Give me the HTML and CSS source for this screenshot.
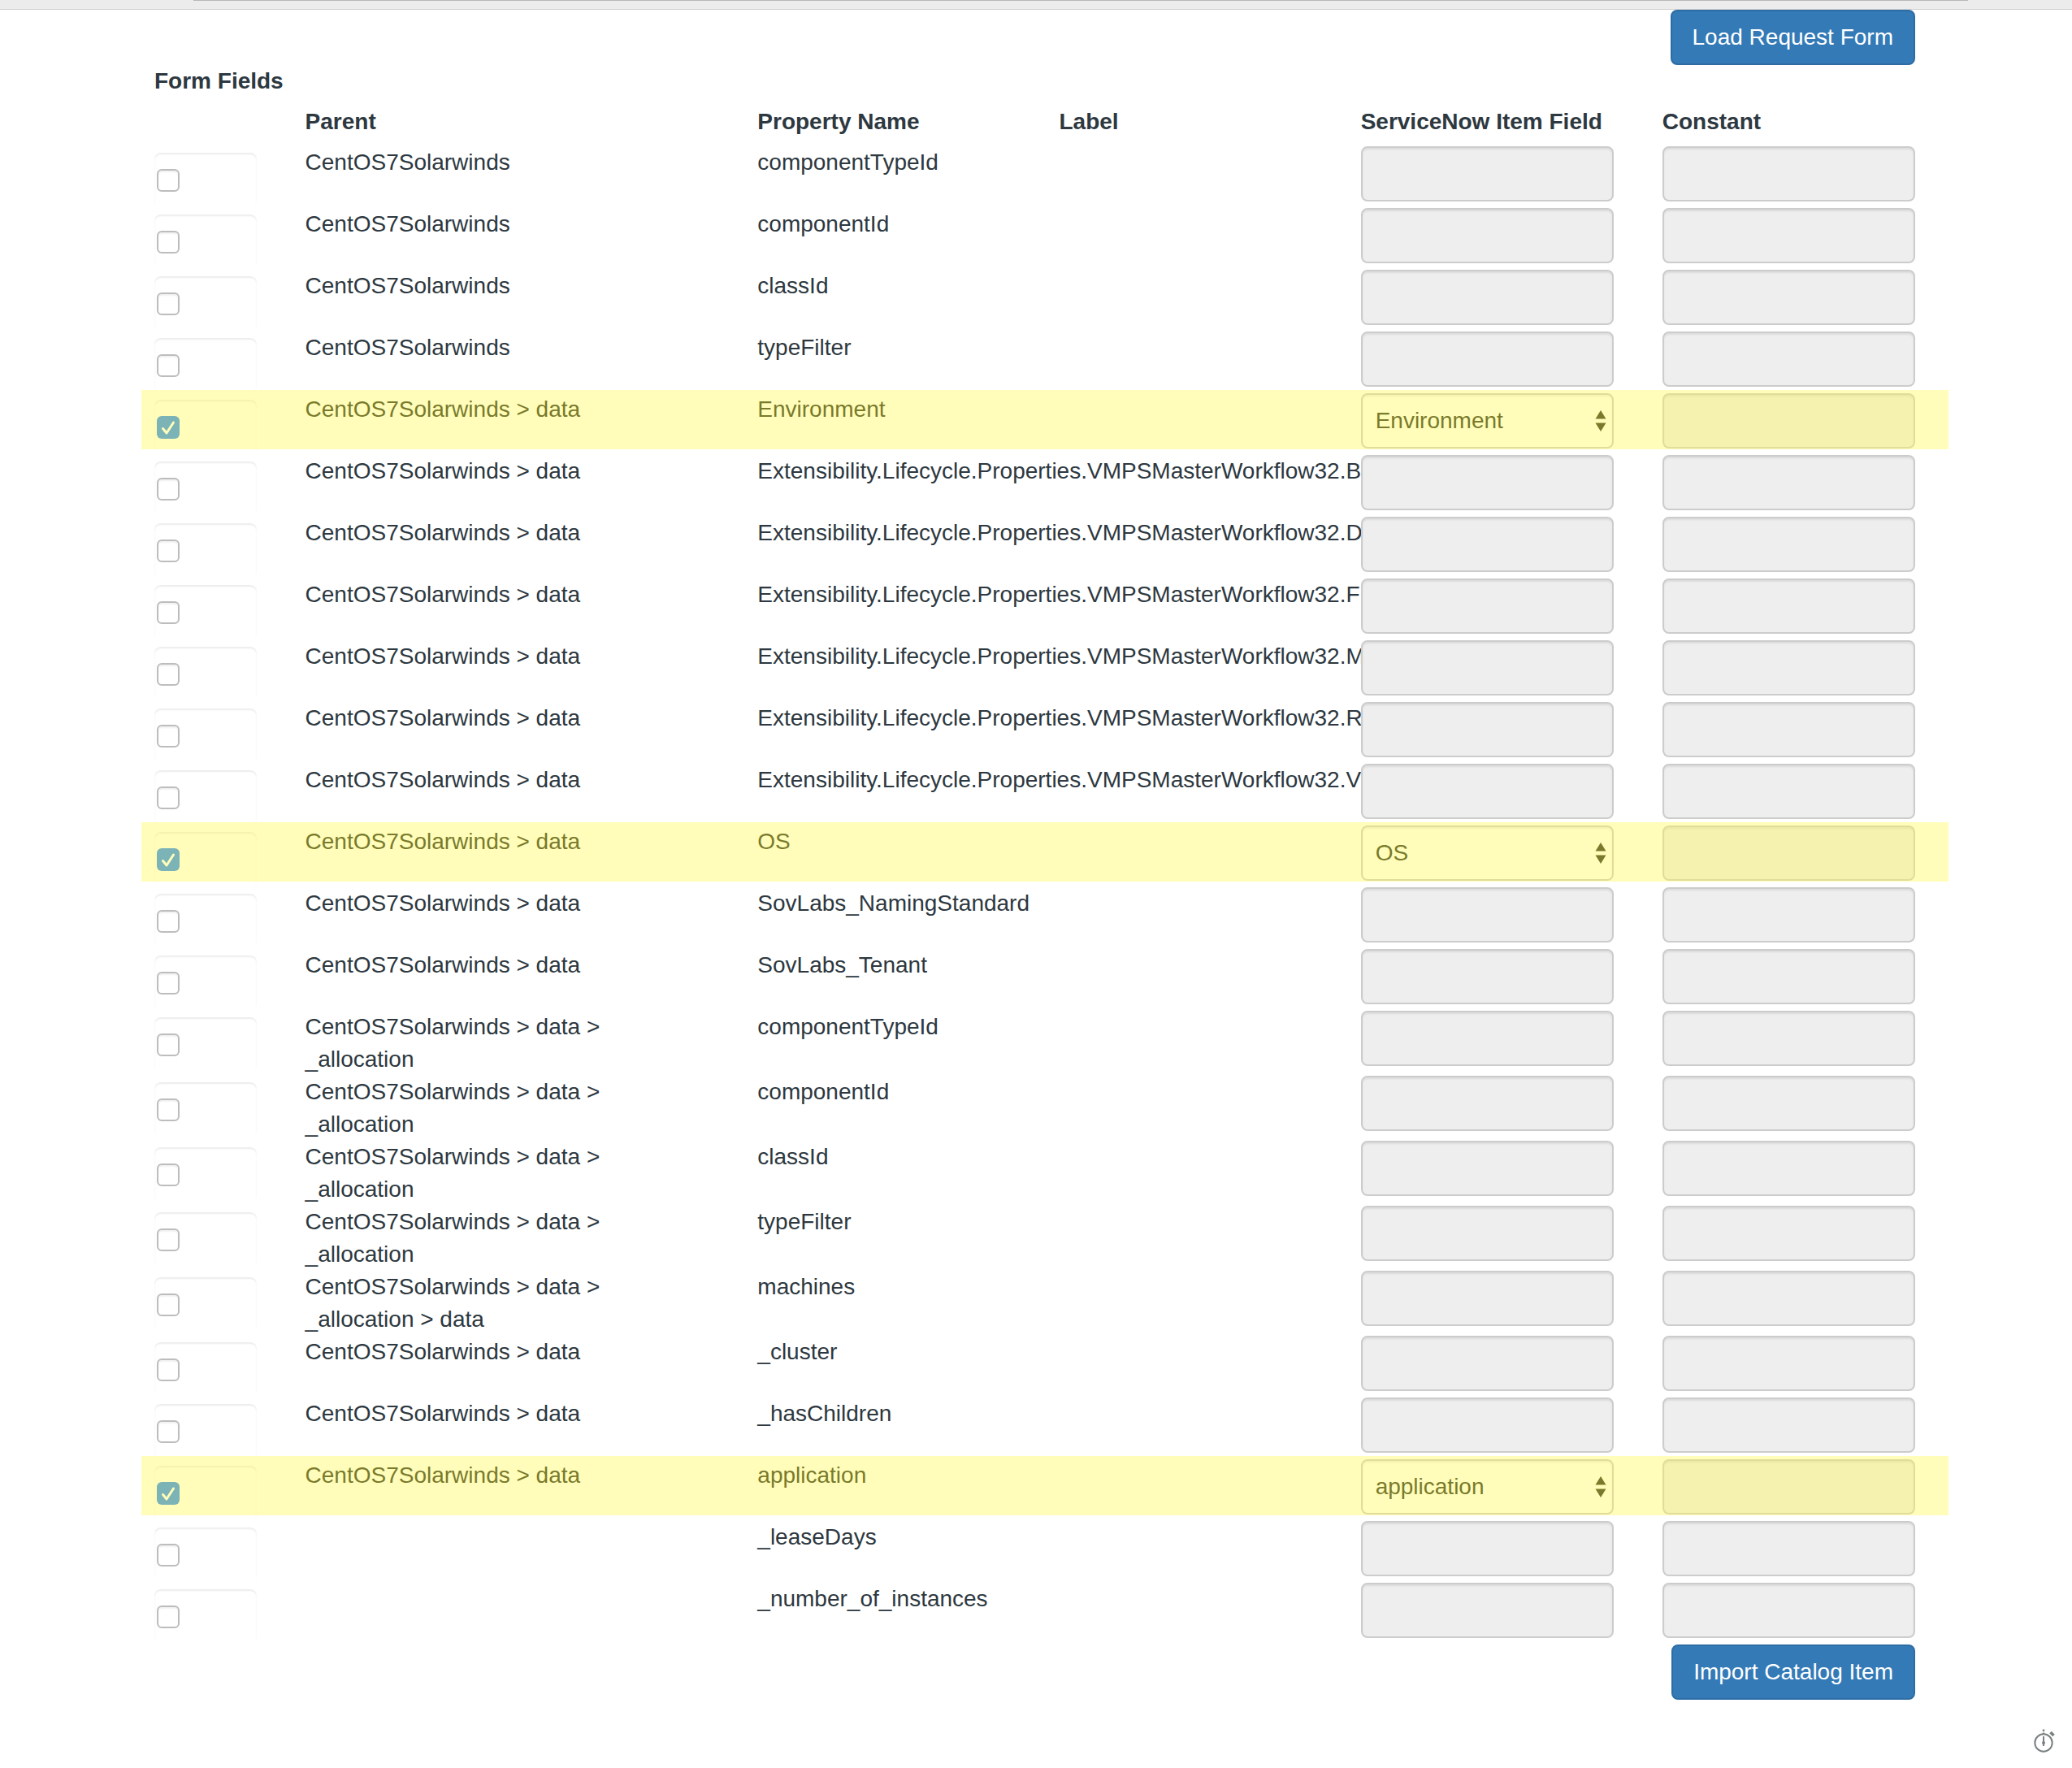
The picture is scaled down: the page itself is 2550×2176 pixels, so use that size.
FILE: index.html
```html
<!DOCTYPE html>
<html lang="en">
<head>
<meta charset="utf-8">
<meta name="viewport" content="width=device-width, initial-scale=1">
<title>Import Catalog Item</title>
<link rel="stylesheet" href="styles.css">
</head>
<body>
<div class="topbar"><div class="topbar-line"></div></div>
<main class="page">
<div class="actions"><button class="btn" type="button">Load Request Form</button></div>
<h2 class="title">Form Fields</h2>
<table class="fields">
<colgroup><col class="c1"><col class="c3"><col class="c2"><col class="c2"><col class="c2"><col class="c2"></colgroup>
<thead>
<tr><td></td><th scope="col">Parent</th><th scope="col">Property Name</th><th scope="col">Label</th><th scope="col">ServiceNow Item Field</th><th scope="col">Constant</th></tr>
</thead>
<tbody>
<tr><td><label class="tick"><input type="checkbox" aria-label="componentTypeId"></label></td><td>CentOS7Solarwinds</td><td>componentTypeId</td><td></td><td><input class="control" type="text" aria-label="Item field" disabled></td><td><input class="control" type="text" aria-label="Constant" disabled></td></tr>
<tr><td><label class="tick"><input type="checkbox" aria-label="componentId"></label></td><td>CentOS7Solarwinds</td><td>componentId</td><td></td><td><input class="control" type="text" aria-label="Item field" disabled></td><td><input class="control" type="text" aria-label="Constant" disabled></td></tr>
<tr><td><label class="tick"><input type="checkbox" aria-label="classId"></label></td><td>CentOS7Solarwinds</td><td>classId</td><td></td><td><input class="control" type="text" aria-label="Item field" disabled></td><td><input class="control" type="text" aria-label="Constant" disabled></td></tr>
<tr><td><label class="tick"><input type="checkbox" aria-label="typeFilter"></label></td><td>CentOS7Solarwinds</td><td>typeFilter</td><td></td><td><input class="control" type="text" aria-label="Item field" disabled></td><td><input class="control" type="text" aria-label="Constant" disabled></td></tr>
<tr class="marked"><td><label class="tick"><input type="checkbox" aria-label="Environment" checked></label></td><td>CentOS7Solarwinds &gt; data</td><td>Environment</td><td></td><td><div class="picker"><select class="control" aria-label="Item field"><option>Environment</option></select><svg class="arrows" viewBox="0 0 14 26" aria-hidden="true"><path d="M7 0l6.500 10.500H.5zM7 26l6.500-10.500H.5z"/></svg></div></td><td><input class="control" type="text" aria-label="Constant" disabled></td></tr>
<tr><td><label class="tick"><input type="checkbox" aria-label="Workflow32.B"></label></td><td>CentOS7Solarwinds &gt; data</td><td class="long">Extensibility.Lifecycle.Properties.VMPSMasterWorkflow32.B</td><td></td><td><input class="control" type="text" aria-label="Item field" disabled></td><td><input class="control" type="text" aria-label="Constant" disabled></td></tr>
<tr><td><label class="tick"><input type="checkbox" aria-label="Workflow32.D"></label></td><td>CentOS7Solarwinds &gt; data</td><td class="long">Extensibility.Lifecycle.Properties.VMPSMasterWorkflow32.D</td><td></td><td><input class="control" type="text" aria-label="Item field" disabled></td><td><input class="control" type="text" aria-label="Constant" disabled></td></tr>
<tr><td><label class="tick"><input type="checkbox" aria-label="Workflow32.F"></label></td><td>CentOS7Solarwinds &gt; data</td><td class="long">Extensibility.Lifecycle.Properties.VMPSMasterWorkflow32.F</td><td></td><td><input class="control" type="text" aria-label="Item field" disabled></td><td><input class="control" type="text" aria-label="Constant" disabled></td></tr>
<tr><td><label class="tick"><input type="checkbox" aria-label="Workflow32.M"></label></td><td>CentOS7Solarwinds &gt; data</td><td class="long">Extensibility.Lifecycle.Properties.VMPSMasterWorkflow32.M</td><td></td><td><input class="control" type="text" aria-label="Item field" disabled></td><td><input class="control" type="text" aria-label="Constant" disabled></td></tr>
<tr><td><label class="tick"><input type="checkbox" aria-label="Workflow32.R"></label></td><td>CentOS7Solarwinds &gt; data</td><td class="long">Extensibility.Lifecycle.Properties.VMPSMasterWorkflow32.R</td><td></td><td><input class="control" type="text" aria-label="Item field" disabled></td><td><input class="control" type="text" aria-label="Constant" disabled></td></tr>
<tr><td><label class="tick"><input type="checkbox" aria-label="Workflow32.V"></label></td><td>CentOS7Solarwinds &gt; data</td><td class="long">Extensibility.Lifecycle.Properties.VMPSMasterWorkflow32.V</td><td></td><td><input class="control" type="text" aria-label="Item field" disabled></td><td><input class="control" type="text" aria-label="Constant" disabled></td></tr>
<tr class="marked"><td><label class="tick"><input type="checkbox" aria-label="OS" checked></label></td><td>CentOS7Solarwinds &gt; data</td><td>OS</td><td></td><td><div class="picker"><select class="control" aria-label="Item field"><option>OS</option></select><svg class="arrows" viewBox="0 0 14 26" aria-hidden="true"><path d="M7 0l6.500 10.500H.5zM7 26l6.500-10.500H.5z"/></svg></div></td><td><input class="control" type="text" aria-label="Constant" disabled></td></tr>
<tr><td><label class="tick"><input type="checkbox" aria-label="SovLabs_NamingStandard"></label></td><td>CentOS7Solarwinds &gt; data</td><td>SovLabs_NamingStandard</td><td></td><td><input class="control" type="text" aria-label="Item field" disabled></td><td><input class="control" type="text" aria-label="Constant" disabled></td></tr>
<tr><td><label class="tick"><input type="checkbox" aria-label="SovLabs_Tenant"></label></td><td>CentOS7Solarwinds &gt; data</td><td>SovLabs_Tenant</td><td></td><td><input class="control" type="text" aria-label="Item field" disabled></td><td><input class="control" type="text" aria-label="Constant" disabled></td></tr>
<tr><td><label class="tick"><input type="checkbox" aria-label="allocation componentTypeId"></label></td><td>CentOS7Solarwinds &gt; data &gt; _allocation</td><td>componentTypeId</td><td></td><td><input class="control" type="text" aria-label="Item field" disabled></td><td><input class="control" type="text" aria-label="Constant" disabled></td></tr>
<tr><td><label class="tick"><input type="checkbox" aria-label="allocation componentId"></label></td><td>CentOS7Solarwinds &gt; data &gt; _allocation</td><td>componentId</td><td></td><td><input class="control" type="text" aria-label="Item field" disabled></td><td><input class="control" type="text" aria-label="Constant" disabled></td></tr>
<tr><td><label class="tick"><input type="checkbox" aria-label="allocation classId"></label></td><td>CentOS7Solarwinds &gt; data &gt; _allocation</td><td>classId</td><td></td><td><input class="control" type="text" aria-label="Item field" disabled></td><td><input class="control" type="text" aria-label="Constant" disabled></td></tr>
<tr><td><label class="tick"><input type="checkbox" aria-label="allocation typeFilter"></label></td><td>CentOS7Solarwinds &gt; data &gt; _allocation</td><td>typeFilter</td><td></td><td><input class="control" type="text" aria-label="Item field" disabled></td><td><input class="control" type="text" aria-label="Constant" disabled></td></tr>
<tr><td><label class="tick"><input type="checkbox" aria-label="machines"></label></td><td>CentOS7Solarwinds &gt; data &gt; _allocation &gt; data</td><td>machines</td><td></td><td><input class="control" type="text" aria-label="Item field" disabled></td><td><input class="control" type="text" aria-label="Constant" disabled></td></tr>
<tr><td><label class="tick"><input type="checkbox" aria-label="_cluster"></label></td><td>CentOS7Solarwinds &gt; data</td><td>_cluster</td><td></td><td><input class="control" type="text" aria-label="Item field" disabled></td><td><input class="control" type="text" aria-label="Constant" disabled></td></tr>
<tr><td><label class="tick"><input type="checkbox" aria-label="_hasChildren"></label></td><td>CentOS7Solarwinds &gt; data</td><td>_hasChildren</td><td></td><td><input class="control" type="text" aria-label="Item field" disabled></td><td><input class="control" type="text" aria-label="Constant" disabled></td></tr>
<tr class="marked"><td><label class="tick"><input type="checkbox" aria-label="application" checked></label></td><td>CentOS7Solarwinds &gt; data</td><td>application</td><td></td><td><div class="picker"><select class="control" aria-label="Item field"><option>application</option></select><svg class="arrows" viewBox="0 0 14 26" aria-hidden="true"><path d="M7 0l6.500 10.500H.5zM7 26l6.500-10.500H.5z"/></svg></div></td><td><input class="control" type="text" aria-label="Constant" disabled></td></tr>
<tr><td><label class="tick"><input type="checkbox" aria-label="_leaseDays"></label></td><td></td><td>_leaseDays</td><td></td><td><input class="control" type="text" aria-label="Item field" disabled></td><td><input class="control" type="text" aria-label="Constant" disabled></td></tr>
<tr><td><label class="tick"><input type="checkbox" aria-label="_number_of_instances"></label></td><td></td><td>_number_of_instances</td><td></td><td><input class="control" type="text" aria-label="Item field" disabled></td><td><input class="control" type="text" aria-label="Constant" disabled></td></tr>
</tbody>
</table>
<div class="actions"><button class="btn" type="button">Import Catalog Item</button></div>
</main>
<footer class="footer">
<svg class="timer" viewBox="0 0 26 30" role="img" aria-label="Response time" fill="none" stroke="#7b8181" stroke-width="2"><circle cx="12" cy="17" r="10.7"/><path d="M12 7V4.500M12 3V.5" stroke-width="2.400"/><path d="M12 9v12"/><circle cx="12" cy="17" r="2" fill="#7b8181" stroke="none"/><path d="M20.500 4l4 4" stroke-width="3.500"/></svg>
</footer>
</body>
</html>
```
FILE: styles.css
```css
* {
  box-sizing: border-box;
}

body {
  margin: 0;
  background: #fff;
  color: #2d3840;
  font: 28px/40px "Liberation Sans", Arial, sans-serif;
}

.topbar {
  height: 12px;
  padding: 0 128px 0 238px;
  background: #ececec;
  border-bottom: 1px solid #d0d0d0;
}

.topbar-line {
  height: 1px;
  background: #b8b8b8;
}

.page {
  margin: 0 163px 0 160px;
}

.actions {
  display: flex;
  justify-content: flex-end;
  padding: 0 30px;
}

.btn {
  height: 68px;
  padding: 0 25px;
  border: 2px solid #2e6da4;
  border-radius: 8px;
  background: #337ab7;
  color: #fff;
  font: inherit;
}

.title {
  margin: 0;
  padding: 0 30px;
  font-size: 28px;
  line-height: 40px;
}

.fields {
  width: 100%;
  table-layout: fixed;
  border-collapse: collapse;
}

.c1 { width: calc(100% / 12); }
.c2 { width: calc(100% / 6); }
.c3 { width: 25%; }

.fields th,
.fields td {
  padding: 0 30px;
  text-align: left;
  vertical-align: top;
}

.fields th {
  padding-top: 10px;
  padding-bottom: 10px;
}

.fields .long {
  white-space: nowrap;
}

.control {
  display: block;
  position: relative;
  width: 100%;
  height: 68px;
  margin-bottom: 8px;
  padding: 0 16px;
  border: 2px solid #ccc;
  border-radius: 8px;
  background: #fff;
  box-shadow: inset 0 2px 2px rgba(0, 0, 0, 0.075);
  color: inherit;
  font: inherit;
  appearance: none;
}

.control:disabled {
  background: #eee;
}

.picker {
  position: relative;
}

.arrows {
  position: absolute;
  top: 21px;
  right: 9px;
  width: 14px;
  height: 26px;
  fill: currentColor;
}

.tick {
  display: block;
  height: 68px;
  margin-top: 8px;
  padding: 20px 3px;
  border-radius: 8px;
  box-shadow: inset 0 2px 2px rgba(0, 0, 0, 0.075);
}

.tick input {
  display: block;
  width: 28px;
  height: 28px;
  margin: 0;
  border: 2px solid #bdbdbd;
  border-radius: 6px;
  background: #fff;
  box-shadow: inset 0 2px 2px rgba(0, 0, 0, 0.06);
  appearance: none;
}

.tick input:checked {
  border: 0;
  background: #2a88fc url("data:image/svg+xml,%3Csvg xmlns='http://www.w3.org/2000/svg' viewBox='0 0 28 28' fill='none' stroke='white' stroke-width='3' stroke-linecap='round' stroke-linejoin='round'%3E%3Cpath d='M7.500 15.500l4.500 5.500 8.500-13'/%3E%3C/svg%3E") center / 28px 28px no-repeat;
  box-shadow: none;
}

/* Highlighter band drawn over the selected rows */
.marked {
  position: relative;
  color: #282c1b;
}

.marked::after {
  content: "";
  position: absolute;
  top: -4px;
  left: 14px;
  right: -11px;
  height: 73px;
  background: rgba(255, 250, 71, 0.38);
  pointer-events: none;
}

.footer {
  display: flex;
  justify-content: flex-end;
  padding: 36px 21px 18px;
}

.timer {
  width: 26px;
  height: 30px;
}
```
